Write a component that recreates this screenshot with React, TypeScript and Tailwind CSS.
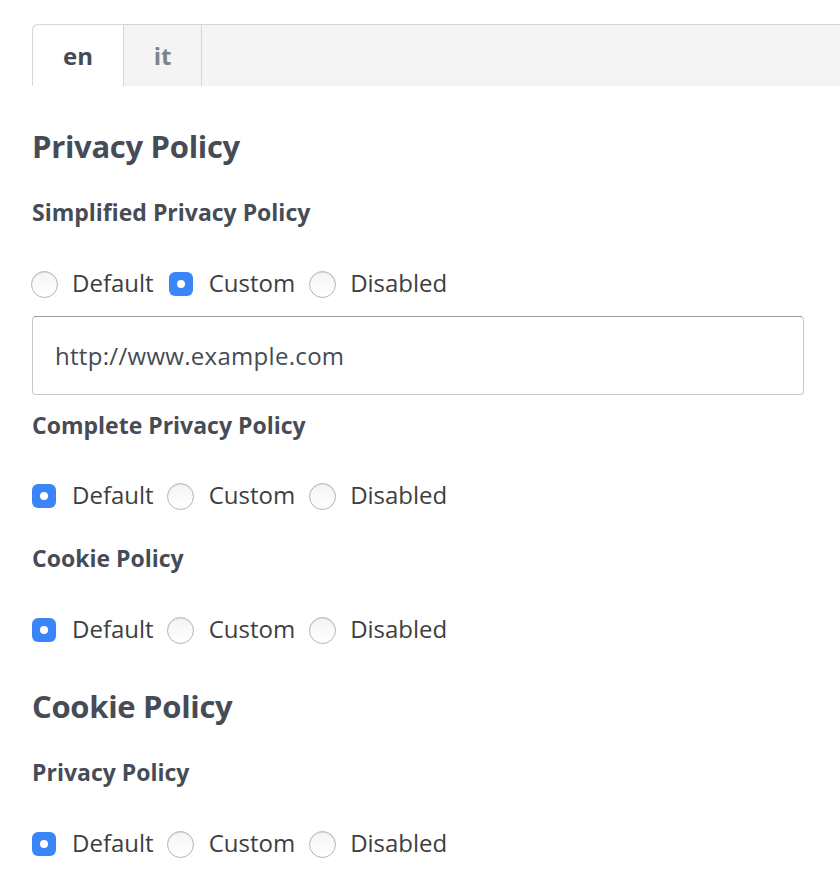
import React from "react";

type Choice = "default" | "custom" | "disabled";

const font = { fontFamily: '"Open Sans", "Noto Sans", sans-serif' };

function Radio({ checked }: { checked: boolean }) {
  return (
    <span className="flex h-[28px] w-[28px] shrink-0 items-center justify-center">
      {checked ? (
        <span className="flex h-[24px] w-[24px] items-center justify-center rounded-[6px] bg-[#3a86f8]">
          <span className="h-[8px] w-[8px] rounded-full bg-white" />
        </span>
      ) : (
        <span className="h-[27px] w-[27px] rounded-full border border-[#b4b4b4] bg-gradient-to-b from-[#f4f4f4] to-white shadow-[inset_0_1px_1px_rgba(0,0,0,0.08)]" />
      )}
    </span>
  );
}

function RadioRow({ value, className = "" }: { value: Choice; className?: string }) {
  const options: { key: Choice; label: string }[] = [
    { key: "default", label: "Default" },
    { key: "custom", label: "Custom" },
    { key: "disabled", label: "Disabled" },
  ];
  return (
    <div className={`-ml-[2px] flex h-[30px] items-center ${className}`}>
      {options.map((o, i) => (
        <label
          key={o.key}
          className={`flex items-center gap-[14px] ${i > 0 ? "ml-[13px]" : ""}`}
        >
          <Radio checked={value === o.key} />
          <span className="-mt-[2px] text-[24px] leading-[30px] text-[#3e3e3e]">{o.label}</span>
        </label>
      ))}
    </div>
  );
}

function Heading({ children, className = "" }: { children: React.ReactNode; className?: string }) {
  return (
    <h2 className={`h-[40px] text-[31px] font-bold leading-[38px] tracking-[-0.3px] text-[#464c56] ${className}`}>
      {children}
    </h2>
  );
}

function SubHeading({ children, className = "" }: { children: React.ReactNode; className?: string }) {
  return (
    <h3 className={`h-[30px] text-[23px] font-bold leading-[29px] text-[#464c56] ${className}`}>
      {children}
    </h3>
  );
}

export default function App() {
  return (
    <div className="min-h-[890px] w-[840px] overflow-hidden bg-white" style={font}>
      {/* language tabs */}
      <div className="ml-[32px] mt-[24px] flex h-[62px] rounded-tl-[6px] border-l border-t border-[#d6d6d6] bg-[#f4f4f4]">
        <button className="w-[90px] rounded-tl-[6px] bg-white text-[24px] font-bold text-[#454b55]">
          en
        </button>
        <button className="w-[79px] border-l border-r border-[#d6d6d6] text-[24px] font-bold text-[#7d838b]">
          it
        </button>
      </div>

      <div className="px-[32px]">
        <Heading className="mt-[41px]">Privacy Policy</Heading>

        <SubHeading className="mt-[31px]">Simplified Privacy Policy</SubHeading>
        <RadioRow value="custom" className="mt-[41px]" />
        <input
          readOnly
          value="http://www.example.com"
          className="mt-[17px] block h-[79px] w-[772px] rounded-[4px] border border-[#c8c8c8] border-t-[#9c9c9c] px-[22px] text-[24px] tracking-[0.3px] text-[#454b55] outline-none"
          style={font}
        />

        <SubHeading className="mt-[16px]">Complete Privacy Policy</SubHeading>
        <RadioRow value="default" className="mt-[40px]" />

        <SubHeading className="mt-[33px]">Cookie Policy</SubHeading>
        <RadioRow value="default" className="mt-[41px]" />

        <Heading className="mt-[42px]">Cookie Policy</Heading>

        <SubHeading className="mt-[31px]">Privacy Policy</SubHeading>
        <RadioRow value="default" className="mt-[41px]" />
      </div>
    </div>
  );
}
